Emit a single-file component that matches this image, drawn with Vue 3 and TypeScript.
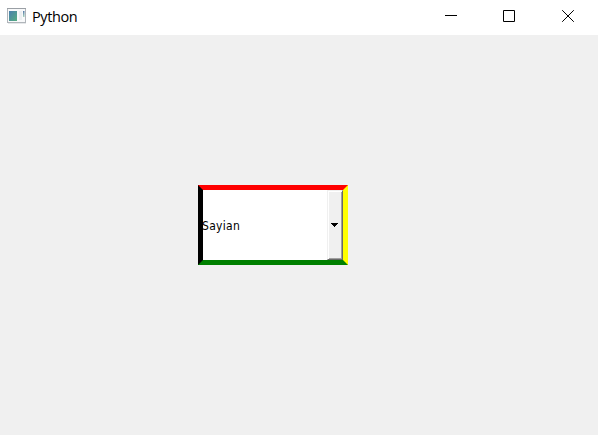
<script setup lang="ts">
import { ref } from 'vue'

const title = ref('Python')
const selected = ref('Sayian')
</script>

<template>
  <main class="window">
    <header class="titlebar">
      <svg class="app-icon" width="19" height="16" viewBox="0 0 19 16" aria-hidden="true">
        <defs>
          <linearGradient id="pane" x1="0" y1="0" x2="1" y2="1">
            <stop offset="0" stop-color="#4b7fae" />
            <stop offset="1" stop-color="#55ad80" />
          </linearGradient>
          <linearGradient id="strip" x1="0" y1="0" x2="0" y2="1">
            <stop offset="0" stop-color="#5478a8" />
            <stop offset="1" stop-color="#a8d3bd" />
          </linearGradient>
        </defs>
        <rect x=".5" y=".5" width="18" height="14" fill="#f8f9fa" stroke="#b0b5ba" />
        <path d="M0 .5h19" stroke="#9a9fa5" />
        <path d="M1 15.5h18" stroke="#e6e8ea" />
        <rect x="2" y="3" width="8" height="10" fill="url(#pane)" />
        <rect x="12" y="3" width="3" height="9" fill="#eceff1" />
        <rect x="16" y="3" width="1.5" height="6" fill="url(#strip)" />
      </svg>
      <h1 class="title">{{ title }}</h1>
      <nav class="controls">
        <button class="control" aria-label="Minimize">
          <svg width="12" height="12" viewBox="0 0 12 12"><path d="M0 5.5h12" /></svg>
        </button>
        <button class="control" aria-label="Maximize">
          <svg width="12" height="12" viewBox="0 0 12 12"><path d="M.5.5h11v11H.5z" /></svg>
        </button>
        <button class="control" aria-label="Close">
          <svg width="12" height="12" viewBox="0 0 12 12"><path d="M.2.2l11.6 11.6M11.8.2L.2 11.8" /></svg>
        </button>
      </nav>
    </header>
    <section class="content">
      <div class="combo" role="combobox">
        <span class="value">{{ selected }}</span>
        <span class="drop">
          <svg width="7" height="4" viewBox="0 0 7 4" shape-rendering="crispEdges">
            <path d="M0 0h7v1H6v1H5v1H4v1H3V3H2V2H1V1H0z" />
          </svg>
        </span>
      </div>
    </section>
  </main>
</template>

<style>
body {
  margin: 0;
}
</style>

<style scoped>
.window {
  display: flex;
  flex-direction: column;
  width: 598px;
  height: 435px;
  background: #f0f0f0;
  overflow: hidden;
}
.titlebar {
  display: flex;
  box-sizing: border-box;
  height: 35px;
  padding-left: 7px;
  background: #fff;
}
.app-icon {
  flex: none;
  margin-top: 8px;
}
.title {
  margin: 0 0 0 6px;
  font: 400 14.5px/33px "Open Sans", "Noto Sans", sans-serif;
  letter-spacing: -0.4px;
  color: #000;
}
.controls {
  display: flex;
  margin-left: auto;
}
.control {
  display: flex;
  justify-content: center;
  box-sizing: border-box;
  width: 58px;
  height: 35px;
  padding: 10px 0 0;
  border: 0;
  background: none;
}
.control:last-child {
  width: 60px;
}
.control svg {
  fill: none;
  stroke: #000;
}
.content {
  display: flex;
  flex: 1;
  justify-content: center;
  align-items: center;
  box-sizing: border-box;
  padding: 0 52px 20px 0;
}
.combo {
  display: flex;
  box-sizing: border-box;
  width: 150px;
  height: 80px;
  border: 5px solid;
  border-color: #f00 #ff0 #008000 #000;
  background: #fff;
}
.value {
  flex: 1;
  margin-left: -1px;
  font: 12px/72px "DejaVu Sans Condensed", "DejaVu Sans", sans-serif;
  height: 70px;
  letter-spacing: 0.3px;
  color: #000;
}
.drop {
  display: flex;
  align-items: center;
  justify-content: center;
  box-sizing: border-box;
  width: 16px;
  padding-right: 1px;
  border: 1px solid;
  border-color: #f0f0f0 #696969 #696969 #f0f0f0;
  background: #f0f0f0;
  box-shadow: inset 1px 1px #fff, inset -1px -1px #a0a0a0;
}
</style>
